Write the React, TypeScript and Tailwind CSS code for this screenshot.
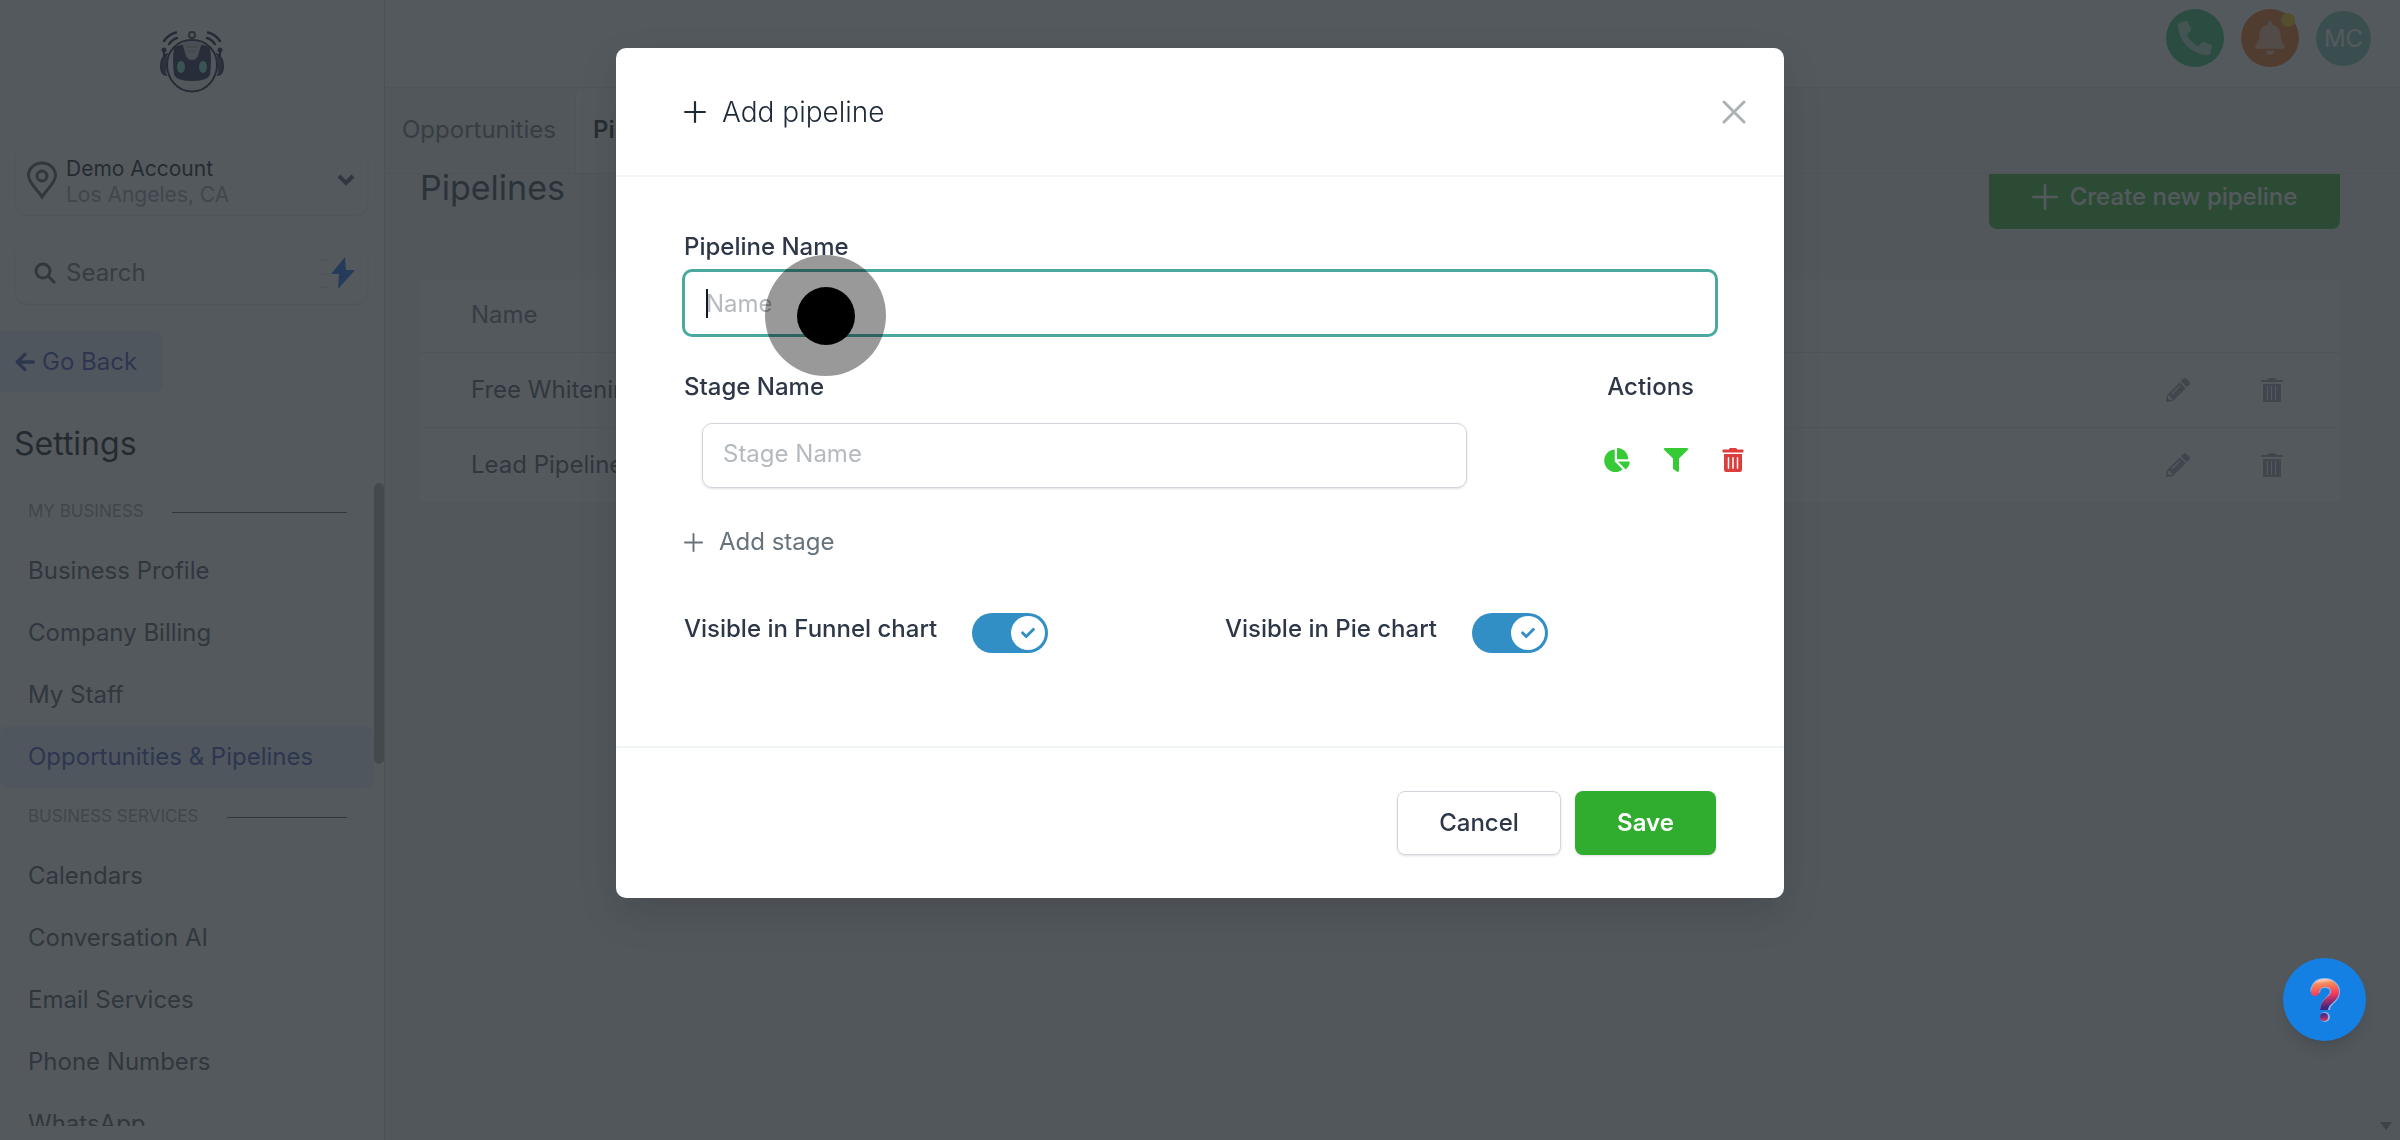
import { useState } from 'react';
import {
  FaArrowLeft,
  FaBell,
  FaChartPie,
  FaCheck,
  FaFilter,
  FaPencilAlt,
  FaPhoneAlt,
  FaTrashAlt,
} from 'react-icons/fa';

const menuSections = [
  {
    title: 'MY BUSINESS',
    items: ['Business Profile', 'Company Billing', 'My Staff', 'Opportunities & Pipelines'],
  },
  {
    title: 'BUSINESS SERVICES',
    items: ['Calendars', 'Conversation AI', 'Email Services', 'Phone Numbers', 'WhatsApp'],
  },
];

const pipelines = ['Free Whitening Pipeline', 'Lead Pipeline'];

function PlusIcon({ className }: { className: string }) {
  return (
    <svg viewBox="0 0 20 20" className={className} fill="none" stroke="currentColor" strokeWidth="2" strokeLinecap="round">
      <path d="M10 1v18M1 10h18" />
    </svg>
  );
}

function RobotLogo() {
  return (
    <svg viewBox="0 0 64 62" className="h-[62px] w-16" fill="none" strokeLinecap="round">
      <path d="M4 10Q9 3 16 1.500M9 13Q13 8 17 7M60 10Q55 3 48 1.500M55 13Q51 8 47 7" stroke="#1b2240" strokeWidth="2.500" />
      <path d="M4 20v10M60 20v10" stroke="#1b2240" strokeWidth="2" />
      <circle cx="4" cy="19" r="2.500" fill="#1b2240" />
      <circle cx="60" cy="19" r="2.500" fill="#1b2240" />
      <path d="M7 23q-6 4-6 12t5 9M57 23q6 4 6 12t-5 9" stroke="#1b2240" strokeWidth="2" fill="#39415f" />
      <path d="M32 9C16 9 7 21 7 34s10 26.500 25 26.500S57 47 57 34 48 9 32 9z" fill="#f4f6f8" stroke="#1b2240" strokeWidth="2" />
      <circle cx="32" cy="4" r="3" stroke="#3a3a3a" strokeWidth="2" />
      <path d="M14 17q4-4 18-4t18 4q2 13 0 27-3 6-18 6t-18-6q-2-14 0-27z" fill="#222a4a" />
      <path d="M22 11h20l-4 14q-2 4-6 4t-6-4z" fill="#c9ccd1" />
      <path d="M27 16h10M28 20h7" stroke="#8d9299" strokeWidth="1" />
      <ellipse cx="21" cy="36" rx="4" ry="6" fill="#7fe3d8" />
      <ellipse cx="43" cy="36" rx="4" ry="6" fill="#7fe3d8" />
    </svg>
  );
}

function BinIcon() {
  return (
    <svg viewBox="0 0 22 24" className="h-6 w-[22px]" fill="currentColor">
      <path d="M0 2h6q1-2 5-2t5 2h6v2H0z" />
      <path d="M2 6h18v18H2zM6 8v14h1V8zm4 0v14h1V8zm4 0v14h1V8z" fillRule="evenodd" />
    </svg>
  );
}

function Sidebar() {
  return (
    <aside className="flex h-full w-[385px] shrink-0 flex-col border-r border-gray-300 bg-white">
      <div className="flex justify-center pt-[31px]">
        <RobotLogo />
      </div>

      <div className="mt-[51px] px-[15px]">
        <button
          type="button"
          className="flex h-[71px] w-[353px] items-center rounded-xl border border-gray-100 pl-[10px] pr-3 text-left shadow-sm"
        >
          <svg viewBox="0 0 32 38" className="h-[38px] w-8 text-gray-600" fill="none" stroke="currentColor" strokeWidth="3">
            <path d="M16 36C12 29 2.500 22 2.500 14.500a13.500 12.500 0 0 1 27 0C29.500 22 20 29 16 36z" />
            <circle cx="16" cy="15" r="5" />
          </svg>
          <span className="ml-2 mt-1 flex flex-1 flex-col">
            <span className="text-[21px] leading-[26px] text-gray-900">Demo Account</span>
            <span className="text-[21px] leading-[26px] text-gray-400">Los Angeles, CA</span>
          </span>
          <svg viewBox="0 0 18 12" className="h-3 w-[18px] text-gray-600" fill="none" stroke="currentColor" strokeWidth="4">
            <path d="M2 2l7 7 7-7" />
          </svg>
        </button>

        <div className="mt-[27px] flex h-[62px] w-[353px] items-center rounded-xl border border-gray-100 pl-[18px] pr-3 shadow-sm">
          <svg viewBox="0 0 22 22" className="h-[22px] w-[22px] text-gray-600" fill="none" stroke="currentColor" strokeWidth="3">
            <circle cx="9" cy="9" r="7" />
            <path d="M14 14l7 7" />
          </svg>
          <input
            type="text"
            aria-label="Search"
            placeholder="Search"
            className="ml-[10px] min-w-0 flex-1 text-2xl outline-none placeholder:text-gray-500"
          />
          <svg viewBox="0 0 36 32" className="h-8 w-9">
            <path d="M0 3h11M0 17h10M0 30h10" stroke="#c7d2fe" strokeWidth="1" />
            <path d="M26 0L12 17h8l-1 15 17-19h-9z" fill="#1468e8" />
          </svg>
        </div>
      </div>

      <button
        type="button"
        className="mt-[27px] flex h-[61px] w-[163px] items-center gap-[6px] rounded-r-lg bg-[#ebf1ff] pl-[14px] text-2xl text-[#3c4fb8]"
      >
        <FaArrowLeft className="h-[22px] w-[22px]" />
        Go Back
      </button>

      <h2 className="mt-[30px] pl-[14px] text-[32px] leading-[44px] text-gray-900">Settings</h2>

      <div className="mb-[14px] mt-[17px] flex min-h-0 flex-1">
        <nav className="flex-1 overflow-hidden">
          {menuSections.map((section) => (
            <div key={section.title}>
              <div className="flex h-[57px] items-center gap-7 pl-7 pr-[27px]">
                <span className="text-[17px] text-gray-400">{section.title}</span>
                <span className="mt-0.5 h-px flex-1 bg-gray-600" />
              </div>
              {section.items.map((item) => (
                <a
                  key={item}
                  href="#"
                  className={
                    item === 'Opportunities & Pipelines'
                      ? 'flex h-[62px] items-center rounded-lg bg-[#ebf1ff] pl-7 text-2xl text-[#3c4fb8]'
                      : 'flex h-[62px] items-center pl-7 text-2xl text-gray-600'
                  }
                >
                  {item}
                </a>
              ))}
            </div>
          ))}
        </nav>
        <div className="h-[281px] w-[10px] rounded-full bg-[#adb1b3]" />
      </div>
    </aside>
  );
}

function Topbar() {
  return (
    <header className="flex h-[87px] shrink-0 items-start justify-end gap-[17px] bg-white pr-[29px] pt-[9px]">
      <button type="button" aria-label="Call" className="flex h-[58px] w-[58px] items-center justify-center rounded-full bg-[#32be70] text-white/60">
        <FaPhoneAlt className="h-[34px] w-[34px]" />
      </button>
      <button type="button" aria-label="Notifications" className="relative flex h-[58px] w-[58px] items-center justify-center rounded-full bg-[#f0701e] text-white/50">
        <FaBell className="h-[34px] w-[34px]" />
        <span className="absolute right-1 top-1 h-[14px] w-[14px] rounded-full bg-[#f5c518]" />
      </button>
      <button type="button" className="mt-0.5 h-[55px] w-[55px] rounded-full bg-[#7fc8bf] text-2xl text-white">
        MC
      </button>
    </header>
  );
}

function PipelinesPage() {
  return (
    <div className="flex min-w-0 flex-1 flex-col">
      <Topbar />

      <nav className="flex h-[87px] shrink-0 border-y border-gray-200 bg-[#f0f2f4] text-2xl">
        <a href="#" className="flex w-[190px] items-center pb-0.5 pl-[17px] text-gray-500">
          Opportunities
        </a>
        <a href="#" className="flex items-center rounded-tl-lg border-l border-gray-200 bg-white px-[17px] pb-0.5 font-semibold text-gray-800">
          Pipelines
        </a>
      </nav>

      <main className="min-h-0 flex-1 overflow-hidden bg-[#f0f2f5] pl-[35px] pr-[60px]">
        <div className="-mt-[9px] flex items-start justify-between">
          <h1 className="text-[34px] leading-[46px] text-gray-700">Pipelines</h1>
          <button
            type="button"
            className="flex h-16 w-[351px] items-center justify-center gap-3 rounded-lg bg-[#37b837] text-2xl font-medium text-white"
          >
            <PlusIcon className="h-[26px] w-[26px]" />
            Create new pipeline
          </button>
        </div>

        <table className="mt-[50px] w-full bg-white text-left text-2xl text-gray-600">
          <thead>
            <tr className="h-[73px] border-b border-gray-200">
              <th className="pl-[51px] font-normal text-gray-500">Name</th>
              <th className="w-[95px]" />
              <th className="w-[79px]" />
            </tr>
          </thead>
          <tbody>
            {pipelines.map((name) => (
              <tr key={name} className="h-[75px] border-b border-gray-200">
                <td className="pl-[51px]">{name}</td>
                <td>
                  <button type="button" aria-label={`Edit ${name}`} className="flex text-gray-400">
                    <FaPencilAlt className="h-6 w-6" />
                  </button>
                </td>
                <td>
                  <button type="button" aria-label={`Delete ${name}`} className="flex text-gray-400">
                    <BinIcon />
                  </button>
                </td>
              </tr>
            ))}
          </tbody>
        </table>
      </main>
    </div>
  );
}

function Toggle({ id, label }: { id: string; label: string }) {
  const [checked, setChecked] = useState(true);

  return (
    <div className="flex items-start gap-[35px]">
      <label htmlFor={id} className="text-2xl leading-8 font-medium">
        {label}
      </label>
      <span className="relative flex">
        <input
          id={id}
          type="checkbox"
          role="switch"
          checked={checked}
          onChange={(e) => setChecked(e.target.checked)}
          className="h-10 w-[76px] appearance-none rounded-full bg-gray-300 checked:bg-[#318fc5]"
        />
        <span
          className={
            checked
              ? 'pointer-events-none absolute right-[3px] top-[3px] flex h-[34px] w-[34px] items-center justify-center rounded-full bg-white'
              : 'pointer-events-none absolute left-[3px] top-[3px] flex h-[34px] w-[34px] items-center justify-center rounded-full bg-white'
          }
        >
          {checked && <FaCheck className="h-[14px] w-[14px] text-[#318fc5]" />}
        </span>
      </span>
    </div>
  );
}

function AddPipelineModal() {
  const [name, setName] = useState('');
  const [stage, setStage] = useState('');

  return (
    <div
      role="dialog"
      aria-labelledby="modal-title"
      className="flex w-[1168px] max-w-full flex-col rounded-[10px] bg-white text-[#2d3748] shadow-[0_16px_40px_rgba(0,0,0,0.12)]"
    >
      <div className="flex h-[129px] items-center justify-between border-b-2 border-[#f3f6f6] pl-[68px] pr-[38px]">
        <div className="flex items-center gap-4 text-gray-800">
          <PlusIcon className="h-[22px] w-[22px]" />
          <h2 id="modal-title" className="text-[28px] leading-9 font-light">
            Add pipeline
          </h2>
        </div>
        <button type="button" aria-label="Close" className="text-[#aab2b5]">
          <svg viewBox="0 0 24 24" className="h-6 w-6" fill="none" stroke="currentColor" strokeWidth="3" strokeLinecap="round">
            <path d="M2 2l20 20M22 2L2 22" />
          </svg>
        </button>
      </div>

      <div className="px-[66px] pb-[93px] pt-[54px] text-2xl">
        <label htmlFor="pipelineName" className="block pl-0.5 leading-8 font-medium">
          Pipeline Name
        </label>
        <div className="relative mt-[6px]">
          <input
            id="pipelineName"
            type="text"
            value={name}
            onChange={(e) => setName(e.target.value)}
            placeholder="Name"
            className="block h-[68px] w-full rounded-[10px] border-3 border-[#4aa8a0] px-[21px] outline-none placeholder:text-[#b4babd]"
          />
          <span className="absolute left-6 top-5 h-[29px] w-0.5 bg-gray-900" />
          {/* click indicator */}
          <span className="pointer-events-none absolute -top-[14px] left-[83px] flex h-[121px] w-[121px] items-center justify-center rounded-full bg-black/40">
            <span className="h-[58px] w-[58px] rounded-full bg-black" />
          </span>
        </div>

        <div className="mt-[34px] flex justify-between pl-0.5 pr-6 leading-8 font-medium">
          <label htmlFor="stageName">Stage Name</label>
          <span>Actions</span>
        </div>

        <div className="mt-5 -mr-[26px] flex items-center justify-between pl-5">
          <input
            id="stageName"
            type="text"
            value={stage}
            onChange={(e) => setStage(e.target.value)}
            placeholder="Stage Name"
            className="h-[65px] w-[765px] rounded-[10px] border border-gray-300 px-5 pb-1 shadow outline-none placeholder:text-[#b4babd]"
          />
          <div className="mt-2 flex items-center gap-[34px]">
            <button type="button" aria-label="Show in pie chart" className="text-[#37ca37]">
              <FaChartPie className="h-6 w-[26px]" />
            </button>
            <button type="button" aria-label="Show in funnel chart" className="text-[#37ca37]">
              <FaFilter className="h-6 w-6" />
            </button>
            <button type="button" aria-label="Delete stage" className="text-[#dc3d3d]">
              <FaTrashAlt className="h-6 w-[22px]" />
            </button>
          </div>
        </div>

        <button type="button" className="mt-[38px] flex items-center gap-4 pl-0.5 leading-8 text-[#66737a]">
          <PlusIcon className="h-[19px] w-[19px]" />
          Add stage
        </button>

        <div className="mt-[55px] grid grid-cols-2 gap-12 pl-0.5">
          <Toggle id="funnelChart" label="Visible in Funnel chart" />
          <Toggle id="pieChart" label="Visible in Pie chart" />
        </div>
      </div>

      <div className="flex justify-end gap-[14px] border-t-2 border-[#eef3f5] px-[68px] pb-[43px] pt-[43px] text-2xl font-medium">
        <button type="button" className="h-16 w-[164px] rounded-lg border border-gray-300 shadow-sm">
          Cancel
        </button>
        <button type="button" className="h-16 w-[141px] rounded-lg bg-[#30ad2f] font-semibold text-white shadow-sm">
          Save
        </button>
      </div>
    </div>
  );
}

function HelpButton() {
  return (
    <button
      type="button"
      aria-label="Help"
      className="fixed bottom-[99px] right-[34px] flex h-[83px] w-[83px] items-center justify-center rounded-full bg-[#1580e4] shadow-lg"
    >
      <svg viewBox="0 0 30 46" className="h-[46px] w-[30px]" fill="none">
        <defs>
          <linearGradient id="help" gradientUnits="userSpaceOnUse" x1="12" y1="0" x2="17" y2="44">
            <stop offset="0" stopColor="#fff" />
            <stop offset="0.150" stopColor="#f58a5a" />
            <stop offset="0.400" stopColor="#f8395a" />
            <stop offset="0.700" stopColor="#3b2480" />
            <stop offset="0.850" stopColor="#4a2a86" />
            <stop offset="1" stopColor="#e0315c" />
          </linearGradient>
        </defs>
        <path d="M5 15c1-7 5-9 10-9 6 0 10 4 10 9 0 8-10 8-10 18" stroke="#8fb4ec" strokeWidth="10" />
        <circle cx="15" cy="40" r="5" fill="#8fb4ec" />
        <circle cx="5" cy="15" r="4" fill="url(#help)" />
        <path d="M5 15c1-7 5-9 10-9 6 0 10 4 10 9 0 8-11 8-11 18" stroke="url(#help)" strokeWidth="8" />
        <circle cx="14" cy="40" r="4" fill="url(#help)" />
      </svg>
    </button>
  );
}

export default function App() {
  return (
    <div className="h-screen overflow-hidden font-['Inter',sans-serif]">
      <div className="flex h-full">
        <Sidebar />
        <PipelinesPage />
      </div>

      <div className="fixed inset-0 flex items-start justify-center bg-[#293034]/80 pt-12">
        <AddPipelineModal />
        <svg viewBox="0 0 12 8" className="absolute bottom-[10px] right-2 h-2 w-3" fill="#3c4245">
          <path d="M0 0h12L6 8z" />
        </svg>
      </div>

      <HelpButton />
    </div>
  );
}
